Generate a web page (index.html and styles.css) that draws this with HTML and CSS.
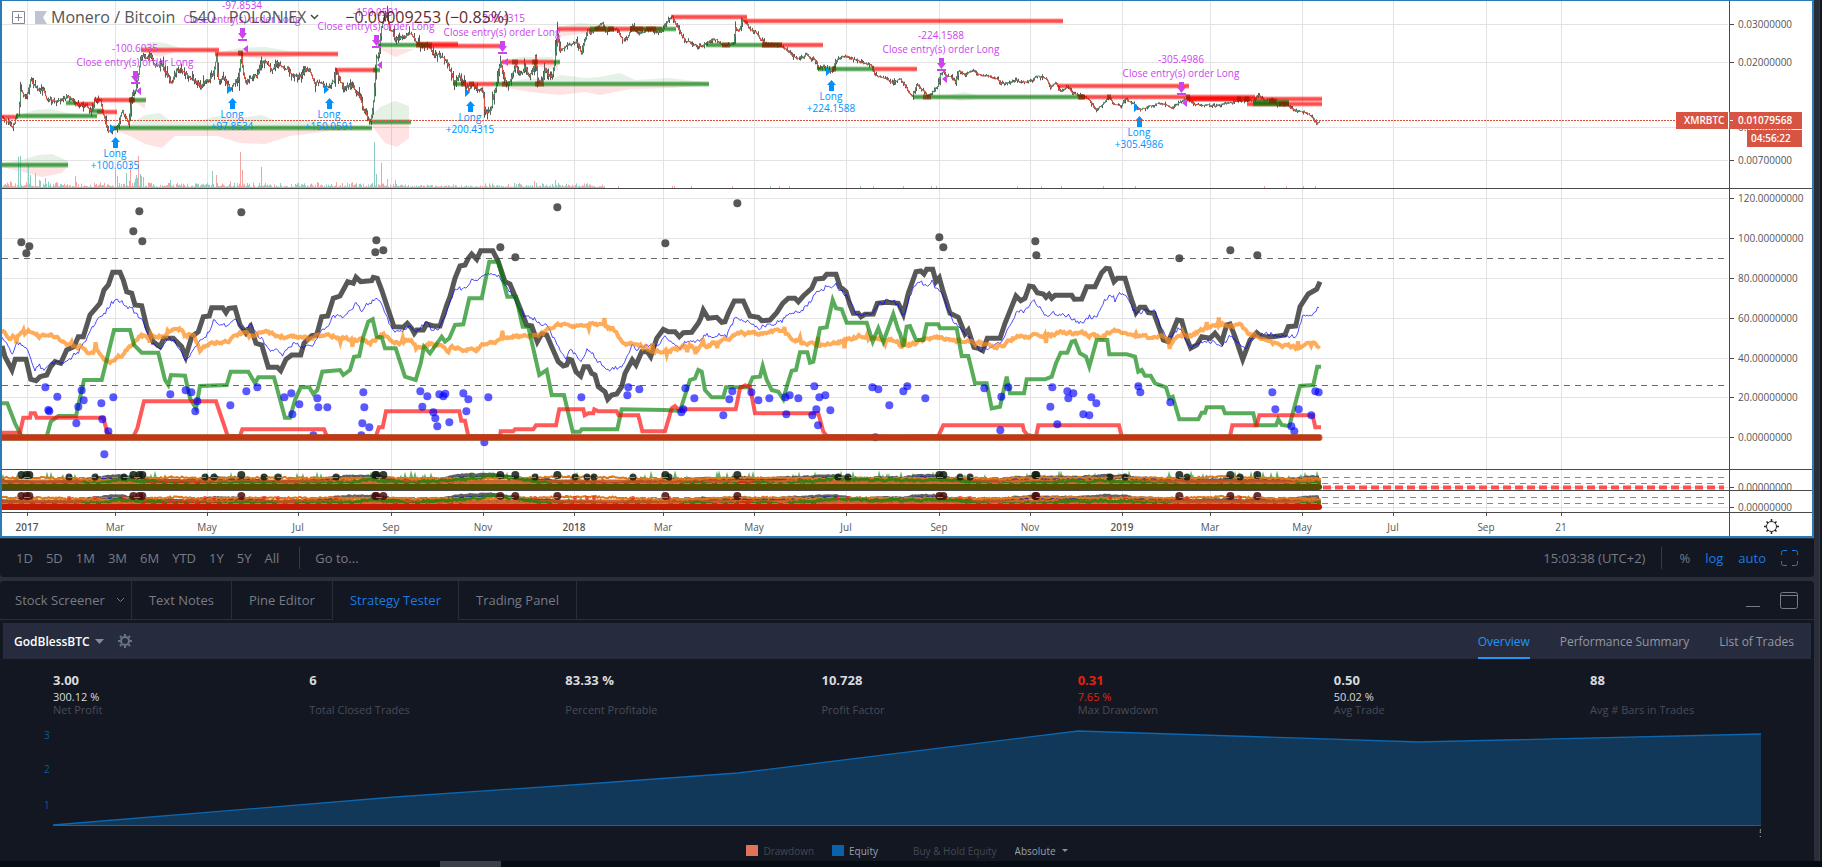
FILE: index.html
```
<!DOCTYPE html>
<html lang="en">

<head>
    <meta charset="UTF-8">
    <meta name="viewport" content="width=device-width, initial-scale=1.0">

    <link rel="stylesheet" href="styles.css">

    <title>XMRBTC - Strategy Tester</title>
</head>

<body>
    <div class="layout">
        <main class="main">
            <section class="chart">
                <svg class="chart_svg" id="chart" viewBox="2 1 1810 535" role="img" aria-label="XMRBTC price chart"></svg>
                <header class="legend">
                    <svg class="legend_add" width="13" height="13" viewBox="0 0 13 13"><path d="M.5 .5h12v12h-12zM3 6.5h7M6.5 3v7" fill="none" stroke="#777b86"/></svg>
                    <svg class="legend_flag" width="12" height="13" viewBox="0 0 12 13"><path d="M0 0h12L8 6.500l4 6.500H0z" fill="#b9becb"/></svg>
                    <h1 class="legend_title"><span>Monero / Bitcoin</span><span>540</span><span>POLONIEX</span></h1>
                    <svg class="legend_more" width="9" height="6" viewBox="0 0 9 6"><path d="M1 1l3.500 3.500L8 1" fill="none" stroke="#333" stroke-width="1.500"/></svg>
                    <span class="legend_change">−0.00009253 (−0.85%)</span>
                </header>
            </section>

            <nav class="toolbar">
                <div class="ranges">
                    <button>1D</button>
                    <button>5D</button>
                    <button>1M</button>
                    <button>3M</button>
                    <button>6M</button>
                    <button>YTD</button>
                    <button>1Y</button>
                    <button>5Y</button>
                    <button>All</button>
                </div>
                <button class="goto">Go to...</button>
                <div class="scale">
                    <button class="clock">15:03:38 (UTC+2)</button>
                    <button>%</button>
                    <button class="on">log</button>
                    <button class="on">auto</button>
                    <button class="on" aria-label="Full screen">
                        <svg width="17" height="16" viewBox="0 0 17 16"><path d="M.5 5V2.500a2 2 0 0 1 2-2H6M11 .5h3.500a2 2 0 0 1 2 2V5M16.500 11v2.500a2 2 0 0 1-2 2H11M6 15.500H2.500a2 2 0 0 1-2-2V11" fill="none" stroke="currentColor"/></svg>
                    </button>
                </div>
            </nav>

            <section class="panel">
                <div class="tabs">
                    <button class="tab tab_menu">Stock Screener
                        <svg width="9" height="6" viewBox="0 0 9 6"><path d="M1 1l3.500 3.500L8 1" fill="none" stroke="currentColor"/></svg>
                    </button>
                    <button class="tab">Text Notes</button>
                    <button class="tab">Pine Editor</button>
                    <button class="tab active">Strategy Tester</button>
                    <button class="tab">Trading Panel</button>
                    <div class="tabs_tools">
                        <button aria-label="Minimize"><svg width="14" height="17" viewBox="0 0 14 17"><path d="M0 14.500h14" stroke="currentColor"/></svg></button>
                        <button aria-label="Maximize"><svg width="18" height="17" viewBox="0 0 18 17"><path d="M2.500 .5h13a2 2 0 0 1 2 2v12a2 2 0 0 1-2 2h-13a2 2 0 0 1-2-2v-12a2 2 0 0 1 2-2zM.5 3.500h17" fill="none" stroke="currentColor"/></svg></button>
                    </div>
                </div>

                <div class="report_head">
                    <select class="strategy" aria-label="Strategy"><option>GodBlessBTC</option></select>
                    <svg class="caret" width="9" height="5" viewBox="0 0 9 5"><path d="M0 0h9L4.500 5z" fill="#858b98"/></svg>
                    <button class="gear" aria-label="Settings">
                        <svg width="14" height="14" viewBox="0 0 14 14"><circle cx="7" cy="7" r="4" fill="none" stroke="#667783" stroke-width="2"/><path d="M7 0v2M7 12v2M0 7h2M12 7h2M2 2l1.500 1.500M10.500 10.500L12 12M12 2l-1.500 1.500M3.500 10.500L2 12" stroke="#667783" stroke-width="2"/></svg>
                    </button>
                    <div class="report_tabs">
                        <button class="active">Overview</button>
                        <button>Performance Summary</button>
                        <button>List of Trades</button>
                    </div>
                </div>

                <dl class="stats">
                    <div><dd>3.00</dd><dd class="pct">300.12 %</dd><dt>Net Profit</dt></div>
                    <div><dd>6</dd><dd class="pct"></dd><dt>Total Closed Trades</dt></div>
                    <div><dd>83.33 %</dd><dd class="pct"></dd><dt>Percent Profitable</dt></div>
                    <div><dd>10.728</dd><dd class="pct"></dd><dt>Profit Factor</dt></div>
                    <div class="down"><dd>0.31</dd><dd class="pct">7.65 %</dd><dt>Max Drawdown</dt></div>
                    <div><dd>0.50</dd><dd class="pct">50.02 %</dd><dt>Avg Trade</dt></div>
                    <div><dd>88</dd><dd class="pct"></dd><dt>Avg # Bars in Trades</dt></div>
                </dl>

                <svg class="equity" viewBox="0 720 1814 120" role="img" aria-label="Equity">
                    <path d="M53 825L395 797L600 783L738 773L1078 731L1419 742L1761 734V825z" fill="#113759"/>
                    <path d="M53 825L395 797L600 783L738 773L1078 731L1419 742L1761 734" fill="none" stroke="#0c66b0" stroke-width="1.300"/>
                    <path d="M53 825.500H1761" stroke="#55534f"/>
                    <g class="equity_axis">
                        <text x="44" y="739">3</text>
                        <text x="44" y="773">2</text>
                        <text x="44" y="809">1</text>
                    </g>
                    <svg x="1750" y="826" width="11" height="14"><text class="equity_last" x="9" y="11">5</text></svg>
                </svg>

                <div class="series">
                    <label class="off"><input type="checkbox" class="swatch drawdown" checked>Drawdown</label>
                    <label><input type="checkbox" class="swatch eq" checked>Equity</label>
                    <label class="off"><input type="checkbox" class="swatch">Buy &amp; Hold Equity</label>
                    <span class="mode">
                        <select aria-label="Units"><option>Absolute</option></select>
                        <svg width="6" height="3" viewBox="0 0 6 3"><path d="M0 0h6L3 3z" fill="#8a93a0"/></svg>
                    </span>
                </div>
            </section>
        </main>
        <aside class="sidebar"></aside>
    </div>
    <footer class="strip"><div class="strip_thumb"></div></footer>

    <script src="chart.js"></script>
</body>

</html>
```
FILE: styles.css
```
* {
    box-sizing: border-box;
}

body {
    margin: 0;
    background-color: #2a2e39;
    color: #787b86;
    font-family: "Trebuchet MS", "Open Sans", "Noto Sans", sans-serif;
    font-size: 13px;
}

button,
select {
    margin: 0;
    padding: 0;
    border: 0;
    background: none;
    color: inherit;
    font: inherit;
    cursor: pointer;
}

select {
    appearance: none;
}

svg {
    display: block;
}

.layout {
    display: grid;
    grid-template-columns: minmax(0, 1fr) 8px;
}

.sidebar {
    margin-left: 5px;
    border-left: 1px solid #363a45;
    background-color: #131722;
}

/* chart */
.chart {
    position: relative;
    border: 2px solid #2a7ab5;
    border-top-width: 1px;
    background-color: #fff;
}

.chart_svg {
    width: 100%;
    height: auto;
}

.chart_svg text {
    font-size: 10px;
}

.chart_svg .axis text {
    fill: #555;
}

.chart_svg .axis .year {
    font-weight: 600;
}

.chart_svg .marks text {
    text-anchor: middle;
}

.chart_svg .tag text {
    fill: #fff;
    font-weight: 600;
}

.legend {
    position: absolute;
    top: 4px;
    left: 10px;
    display: flex;
    align-items: center;
    height: 24px;
    font-size: 16px;
    color: #444;
    opacity: 0.9;
}

.legend_flag {
    margin-left: 10px;
}

.legend_title {
    display: flex;
    gap: 13px;
    margin: 0 4px;
    font-size: 16px;
    font-weight: 400;
}

.legend_change {
    margin-left: 26px;
    color: #4f1212;
}

/* range toolbar */
.toolbar {
    display: flex;
    align-items: center;
    height: 39px;
    margin-bottom: 4px;
    padding: 0 16px 0 9px;
    border-top: 1px solid #2a2e39;
    border-radius: 0 0 4px 4px;
    background-color: #131722;
}

.ranges {
    display: flex;
    padding-right: 14px;
    border-right: 1px solid #363a45;
}

.ranges button {
    padding: 2px 6px 2px 7px;
}

.goto {
    margin-left: 15px;
}

.scale {
    display: flex;
    align-items: center;
    gap: 15px;
    margin-left: auto;
}

.clock {
    margin-right: 2px;
    padding: 2px 16px 2px 0;
    border-right: 1px solid #363a45;
}

.on {
    color: #1a7be0;
}

/* bottom panel */
.panel {
    border-radius: 4px 4px 0 0;
    background-color: #131722;
}

.tabs {
    display: flex;
    height: 39px;
    margin-bottom: 3px;
}

.tab {
    padding: 0 17px;
    border-right: 1px solid #2a2e39;
    border-bottom: 1px solid #2a2e39;
}

.tab_menu {
    display: flex;
    align-items: center;
    gap: 11px;
    padding: 0 6px 0 15px;
}

.tab.active {
    border-bottom-color: transparent;
    color: #1a7be0;
}

.tabs_tools {
    display: flex;
    flex: 1;
    align-items: center;
    justify-content: flex-end;
    gap: 20px;
    padding-right: 16px;
    border-bottom: 1px solid #2a2e39;
}

.report_head {
    display: flex;
    align-items: center;
    height: 36px;
    margin: 0 3px;
    padding: 0 17px 0 11px;
    background-color: #262b3e;
    font-size: 12px;
}

.strategy {
    color: #fff;
    font-weight: 600;
}

.caret {
    margin-left: 5px;
}

.gear {
    margin-left: 14px;
}

.report_tabs {
    display: flex;
    gap: 30px;
    height: 100%;
    margin-left: auto;
    color: #9598a1;
}

.report_tabs button {
    padding: 2px 0 0;
    border-bottom: 2px solid transparent;
}

.report_tabs .active {
    border-color: #2196f3;
    color: #2196f3;
}

.stats {
    display: grid;
    grid-template-columns: repeat(6, 1fr) 224px;
    margin: 0;
    padding: 12px 0 0 53px;
    color: #d8dade;
}

.stats div {
    display: flex;
    flex-direction: column;
}

.stats dd {
    margin: 0;
    font-weight: 700;
    line-height: 18px;
}

.stats .pct {
    height: 14px;
    font-size: 11px;
    font-weight: 400;
    line-height: 16px;
}

.stats dt {
    color: #484c57;
    font-size: 11px;
    line-height: 14px;
}

.stats .down dd {
    color: #e0240c;
}

.equity {
    width: 100%;
    height: auto;
    margin-top: 3px;
}

.equity text {
    font-size: 10px;
}

.equity_axis {
    fill: #0d5a99;
}

.equity .equity_last {
    fill: #a0a3ab;
}

.series {
    display: flex;
    align-items: center;
    justify-content: center;
    gap: 18px;
    height: 21px;
    font-size: 10px;
    color: #98a1ae;
}

.series label,
.mode {
    display: flex;
    align-items: center;
    gap: 5px;
}

.series .off {
    color: #444853;
}

.swatch {
    width: 12px;
    height: 11px;
    margin: 0;
    appearance: none;
}

.drawdown {
    background-color: #e0735a;
}

.eq {
    background-color: #0b62aa;
}

.strip {
    height: 6px;
    background-color: #060d12;
}

.strip_thumb {
    width: 61px;
    height: 6px;
    margin-left: 440px;
    background-color: #3c4049;
}
```
FILE: chart.js
```
let svg = document.querySelector('#chart');
let out = [];

// small repeatable noise so every load draws the same bars
let seed = 7;
function rnd() {
    seed = (seed * 16807) % 2147483647;
    return seed / 2147483647;
}

// data comes in blocks of x,y pairs in thirds of a pixel: [left, top, pairs]
function points(blocks) {
    let res = [];
    blocks.forEach(([left, top, text]) => {
        text.trim().split(/\s+/).forEach((pair) => {
            let [x, y] = pair.split(',').map(Number);
            res.push([left + x / 3, top + y / 3]);
        })
    })
    return res;
}

function sample(pts, step) {
    let res = [];
    let i = 0;
    for (let x = pts[0][0]; x <= pts[pts.length - 1][0]; x += step) {
        while (i < pts.length - 2 && pts[i + 1][0] < x) i++;
        let [x1, y1] = pts[i];
        let [x2, y2] = pts[i + 1];
        res.push([x, y1 + (y2 - y1) * (x - x1) / Math.max(x2 - x1, 0.1)]);
    }
    return res;
}

function toPath(pts) {
    return 'M' + pts.map((p) => p[0].toFixed(1) + ' ' + p[1].toFixed(1)).join('L');
}

function path(d, stroke, width = 1, extra = '') {
    out.push(`<path d="${d}" fill="none" stroke="${stroke}" stroke-width="${width}" ${extra}/>`);
}

function text(x, y, str, extra = '') {
    out.push(`<text x="${x}" y="${y}" ${extra}>${str}</text>`);
}

const END = 1321;
const months = [[27, '2017'], [115, 'Mar'], [207, 'May'], [298, 'Jul'], [391, 'Sep'], [483, 'Nov'], [574, '2018'], [663, 'Mar'], [754, 'May'], [846, 'Jul'], [939, 'Sep'], [1030, 'Nov'], [1122, '2019'], [1210, 'Mar'], [1302, 'May'], [1393, 'Jul'], [1486, 'Sep'], [1561, '21']];
const levels = [[24, '0.03000000'], [62, '0.02000000'], [127, '0.01000000'], [160, '0.00700000'], [198, '120.00000000'], [238, '100.00000000'], [278, '80.00000000'], [318, '60.00000000'], [358, '40.00000000'], [397, '20.00000000'], [437, '0.00000000'], [487, '0.00000000'], [507, '0.00000000']];

const price = points([
    [0, 0, `6,350 25,365 35,380 45,355 55,345 60,275 70,290 78,285 90,240 100,255 115,270 125,265 140,300 155,300 170,303 185,302 200,285 215,300 235,318 255,325 275,330 283,300 300,305 312,355 323,385 335,390 350,380 365,335 385,375 395,280 405,265 415,220 420,180 427,160 437,170 445,180 450,160 462,195 475,205 485,195 500,230 515,245 530,210 550,215 570,230 590,245 600,260 610,240 625,240 640,220 648,160 652,240 670,235 690,265 700,245 715,235 722,150 728,220 735,245 750,235 770,225 785,190 800,195 815,205 830,185 845,200 860,205 880,230 900,230 915,210 930,215 945,250 960,245 975,265 990,270 1000,250 1007,205 1015,240 1030,265 1045,250 1060,265 1075,275 1085,320 1100,350 1110,355 1120,300 1127,170 1135,160 1143,80 1150,60 1157,40 1165,80 1175,95 1187,120 1200,110 1215,105 1228,90 1240,110 1255,125 1270,135 1290,140 1310,170 1330,175 1345,195 1349,215`],
    [450, 0, `0,215 12,255 25,225 40,245 55,275 68,250 80,265 98,275 103,340 118,335 128,290 138,250 150,180 158,215 170,260 180,245 195,190 205,205 215,225 222,200 235,230 248,220 255,170 262,250 275,240 285,200 295,235 308,225 315,170 321,110 330,145 345,135 360,130 378,125 392,160 400,130 412,85 420,100 430,90 440,80 455,70 465,95 480,85 500,90 515,120 530,115 545,80 560,100 580,95 600,90 618,95 635,95 642,75 655,60 665,50 675,75 690,100 705,125 725,130 740,138 760,135 790,120 810,130 830,130 850,130 855,85 865,95 875,60 885,65 900,90 915,95 930,120 950,130 975,135 990,140 1010,150 1040,175 1070,165 1090,175 1105,205 1120,200 1145,215 1155,185 1170,175 1195,170 1215,180 1240,195 1260,190 1275,225 1300,230 1325,248 1345,240`],
    [900, 0, `0,240 15,260 35,290 50,255 65,270 80,290 95,280 110,265 120,225 130,215 140,230 150,225 165,250 175,215 195,225 215,215 235,225 260,228 290,235 300,250 330,248 350,240 370,250 395,240 410,225 440,240 450,260 465,250 480,275 500,265 520,280 545,285 565,300 587,330 605,315 625,290 640,315 660,320 675,300 700,310 720,328 750,320 780,310 815,325 840,305 860,295 875,310 900,315 930,318 960,315 1000,305 1030,303 1060,300 1075,285 1090,300 1110,298 1130,315 1160,310 1185,335 1210,335 1235,350 1248,370 1258,360`]
]);

const gray = points([
    [0, 190, `6,468 15,500 36,540 46,508 78,508 92,568 108,572 120,560 140,555 152,530 165,515 182,520 200,480 222,470 235,440 250,440 270,375 300,340 312,300 325,285 338,247 360,247 370,270 380,305 395,310 405,345 425,347 440,410 460,455 480,470 492,445 520,445 545,470 557,500 575,440 595,425 610,380 628,378 635,353 668,353 678,368 686,355 705,353 720,405 738,430 752,410 768,460 785,465 805,532 832,532 842,542 858,508 875,495 902,495 912,460 935,437 950,435 965,380 983,378 1000,325 1020,318 1043,275 1060,280 1068,262 1082,275 1115,272 1120,262 1132,265 1145,300 1165,360 1182,410 1210,412 1222,400 1235,415 1243,430 1250,420 1270,420 1280,402 1300,408 1320,408 1340,345`],
    [450, 190, `0,320 15,265 30,228 45,225 55,205 65,192 80,208 92,182 128,182 145,215 165,275 180,282 200,330 218,375 230,405 245,408 262,455 275,432 290,435 305,470 325,515 340,528 350,525 357,508 365,510 378,545 392,558 402,530 415,530 425,550 435,555 445,590 465,605 473,628 485,615 500,612 515,590 525,550 547,510 558,525 575,485 592,485 602,500 620,445 640,418 655,425 675,425 688,440 700,428 725,427 745,400 752,385 760,360 775,385 800,382 815,397 825,395 835,370 853,333 880,333 900,378 925,382 935,392 960,390 980,368 998,340 1015,325 1035,325 1045,335 1060,318 1085,295 1097,267 1120,265 1130,253 1158,253 1170,290 1188,305 1200,345 1210,370 1225,370 1233,380 1245,373 1270,372 1282,340 1310,337 1345,340`],
    [900, 190, `0,350 10,372 25,310 48,245 62,243 72,252 80,238 98,238 108,275 118,263 128,300 150,370 175,382 195,432 205,420 222,472 235,475 248,482 262,445 300,445 315,400 348,318 362,332 375,325 388,288 400,290 412,308 430,312 438,322 447,313 455,325 465,316 515,316 523,328 545,327 560,290 585,290 605,248 618,235 628,236 642,275 652,265 675,265 690,315 708,368 720,352 735,352 745,368 762,370 780,420 790,450 805,455 820,420 832,390 845,392 860,445 872,475 890,465 905,440 930,445 945,430 965,455 980,405 990,402 1005,440 1028,508 1050,450 1070,428 1085,440 1120,440 1155,435 1165,410 1187,408 1200,350 1225,312 1250,298 1260,275`]
]);

const blue = points([
    [0, 190, `6,435 20,465 36,490 50,455 75,470 90,500 105,540 115,525 135,540 150,515 180,520 210,505 240,480 262,440 280,405 310,375 338,335 365,333 380,355 395,350 408,375 425,380 440,430 460,465 485,475 505,445 530,460 557,512 575,490 600,450 615,445 640,395 680,405 710,390 730,420 752,400 765,425 785,445 805,480 825,475 845,495 865,475 885,460 905,475 945,460 965,415 985,410 1000,375 1030,385 1068,340 1085,360 1100,345 1128,325 1145,345 1165,395 1180,420 1205,425 1230,405 1245,425 1280,395 1300,425 1320,410 1345,355`],
    [450, 190, `0,340 15,300 50,290 65,270 80,278 98,255 150,258 165,290 185,310 200,340 220,375 250,385 270,405 290,400 310,445 330,475 348,505 360,480 378,490 392,520 412,480 430,495 440,510 455,520 472,545 485,535 515,535 532,500 547,460 560,480 580,465 620,470 645,440 665,455 690,475 705,455 740,455 765,435 790,440 815,430 830,440 855,385 880,390 910,405 925,420 940,405 965,405 1000,390 1020,365 1045,370 1075,340 1100,310 1130,290 1158,285 1175,305 1200,330 1215,365 1235,375 1270,370 1285,340 1325,330 1345,345`],
    [900, 190, `10,380 25,330 45,285 65,275 78,290 95,275 110,295 125,310 150,375 170,405 195,430 215,450 240,480 260,475 300,460 325,420 348,370 380,360 400,330 415,345 435,375 455,370 500,375 525,390 550,400 565,380 590,380 610,335 632,310 645,330 655,310 675,312 690,345 710,370 735,360 765,365 785,420 805,445 835,415 850,430 870,475 890,465 910,450 940,455 965,470 990,435 1010,455 1035,480 1055,445 1085,435 1115,430 1135,440 1190,440 1210,375 1240,375 1258,345`]
]);

const orange = points([
    [0, 190, `6,420 30,440 60,432 90,425 115,440 150,440 180,450 210,465 240,470 270,490 290,480 315,510 335,515 365,495 400,460 420,435 460,445 500,430 520,415 545,415 560,430 580,435 600,480 620,465 650,455 690,450 720,435 770,435 795,425 830,440 870,440 920,445 960,440 1000,435 1050,450 1080,450 1110,460 1150,440 1200,455 1225,450 1265,475 1290,460 1320,465 1345,478`],
    [450, 190, `0,470 40,475 80,475 110,460 150,455 195,440 240,440 290,425 320,410 380,405 430,405 470,415 490,420 520,460 560,460 600,480 640,485 690,470 740,475 790,460 850,440 880,430 930,435 980,425 1020,440 1060,460 1130,470 1180,455 1230,440 1290,450 1345,450`],
    [900, 190, `0,470 60,455 110,440 150,450 200,450 250,465 310,465 350,440 400,435 450,435 510,425 560,435 600,440 640,425 700,430 740,440 790,440 815,455 840,435 880,435 920,410 950,405 1020,405 1050,435 1080,440 1130,460 1190,475 1220,465 1262,472`]
]);

const green = points([
    [0, 190, `6,640 22,640 45,700 65,740 140,740 152,695 175,678 228,678 252,570 305,570 342,420 390,420 402,465 425,488 475,488 495,570 505,585 513,555 555,557 570,625 588,655 600,588 680,585 692,545 745,545 765,580 775,562 822,562 855,683 870,683 885,630 902,592 928,592 940,612 952,600 967,545 1020,540 1030,555 1050,540 1062,500 1078,498 1090,440 1105,395 1118,388 1130,440 1145,442 1155,475 1187,475 1215,560 1247,570 1262,520 1272,470 1290,490 1325,440 1335,455 1348,445`],
    [450, 190, `0,440 15,405 40,403 58,325 95,325 118,215 145,215 172,320 198,320 218,410 235,410 268,555 290,540 305,615 342,615 368,725 390,725 395,718 502,718 515,658 645,660 690,663 720,570 735,565 745,540 755,545 765,600 785,622 820,622 828,592 895,592 908,562 930,560 938,528 950,570 965,600 985,605 1000,628 1010,590 1025,542 1038,540 1050,487 1072,487 1080,518 1090,515 1110,415 1130,412 1148,330 1158,355 1175,358 1190,398 1250,398 1268,455 1285,415 1300,455 1320,400 1330,372 1345,420`],
    [900, 190, `0,430 10,470 20,410 30,408 48,450 70,450 80,403 115,403 120,415 170,415 185,498 205,498 225,580 260,580 275,655 300,650 320,560 330,610 372,610 380,568 435,568 455,560 468,520 482,488 502,488 515,455 525,452 540,490 558,500 568,530 590,450 622,450 628,493 680,493 705,500 715,545 725,540 735,557 752,557 765,580 798,592 808,625 818,620 838,688 895,688 905,668 915,668 920,652 968,652 975,670 1060,670 1068,706 1128,706 1135,688 1145,705 1168,708 1200,588 1240,585 1252,530 1263,530`]
]);

const red = points([
    [0, 190, `6,728 60,728 70,683 90,683 92,670 105,670 110,683 310,683 322,728 340,740 400,740 412,715 432,634 648,634 683,738 720,738 727,718 972,718 980,738 1128,738 1137,712 1148,712 1158,664 1349,664`],
    [450, 190, `0,664 28,664 34,692 45,692 55,738 150,738 152,724 190,724 195,718 250,718 258,706 318,706 328,658 400,658 404,676 415,670 430,670 433,658 445,664 500,664 506,676 565,676 577,724 645,724 665,655 675,648 685,658 857,658 870,595 885,586 900,590 915,670 1105,670 1120,725 1130,738`],
    [900, 190, `0,740 115,738 130,706 368,706 372,722 382,735 408,740 415,706 657,706 665,740 990,740 997,706 1070,706 1078,676 1238,676 1246,712 1263,712`]
]);

const grayDots = points([
    [0, 190, `64,157 88,169 79,190 400,124 418,64 427,154 724,67 1129,151 1126,187 1150,181`],
    [450, 190, `151,172 196,202 322,52 646,160 862,40`],
    [900, 190, `118,142 130,172 406,154 409,196 838,205 991,181 1072,196`]
]);

const blueDots = points([
    [0, 190, `136,592 172,620 145,660 148,664 245,601 251,631 235,650 229,700 304,640 307,688 325,724 340,622 313,793 511,613 557,601 574,607 592,634 586,664 691,646 739,604 772,592 853,622 874,610 898,643 877,673 952,625 955,652 982,652 940,736 1090,607 1093,652 1087,700 1108,712 1084,736 1261,604 1267,650 1282,619 1318,613 1330,619 1336,611 1300,667 1306,685 1312,709 1348,697`],
    [450, 190, `40,610 55,628 49,664 115,622 103,757 394,622 535,592 532,616 568,598 706,595 700,658 694,667 733,625 820,676 838,628 847,604 904,607 925,631 958,625 1009,673 1006,622 1019,616 1045,625 1093,589 1108,622 1126,616 1099,658 1087,676 1104,706 1141,661 1267,592 1285,598 1318,646 1276,742`],
    [900, 190, `10,604 22,589 76,625 253,595 304,620 325,592 301,721 451,650 457,592 472,703 502,604 520,610 505,625 550,673 568,676 574,622 589,640 715,589 721,607 811,637 1117,607 1126,658 1196,658 1174,709 1183,724 1234,676 1246,604 1256,607`]
]);

// support and resistance: [x1, x2, y]
const redBars = [[2, 17, 117], [75, 94, 104], [94, 134, 100], [97, 117, 112], [141, 219, 50], [215, 338, 54], [336, 376, 70], [417, 458, 44], [420, 501, 46], [463, 494, 84], [502, 553, 62], [557, 662, 29], [671, 747, 17], [744, 1063, 21], [762, 823, 45], [872, 917, 69], [1058, 1189, 86], [1079, 1255, 97], [1187, 1322, 99], [1187, 1250, 99], [1247, 1322, 104]];
const greenBars = [[16, 97, 116], [66, 76, 103], [92, 102, 111], [129, 146, 100], [112, 372, 128], [370, 411, 122], [2, 68, 165], [373, 380, 70], [378, 427, 45], [454, 463, 84], [494, 709, 84], [553, 560, 62], [590, 613, 29], [630, 676, 29], [706, 782, 45], [818, 873, 69], [913, 1084, 97], [1253, 1289, 102], [1253, 1289, 104]];
const overlaps = [[238, 243, 53], [129, 135, 100], [416, 432, 45], [461, 466, 84], [469, 474, 84], [502, 508, 84], [535, 544, 84], [512, 518, 62], [532, 538, 62], [595, 606, 29], [608, 614, 29], [630, 643, 29], [646, 656, 29], [722, 730, 45], [762, 782, 45], [832, 836, 69], [923, 931, 97], [1078, 1085, 97], [1107, 1111, 97], [1186, 1190, 97], [1237, 1241, 99], [1244, 1249, 99], [1269, 1277, 101], [1279, 1289, 104]];

function grid() {
    let d = '';
    months.forEach(([x]) => { d += `M${x + 0.5} 1V512` });
    levels.forEach(([y]) => { d += `M2 ${y + 0.5}H1728` });
    path(d, '#e3e3e3');
}

function clouds() {
    out.push('<g fill="#008000" opacity=".1">');
    ['M2 163L22 160L38 155L52 154L68 161V165H2z', 'M20 115L35 110L50 109L68 113L94 116z', 'M112 127L130 124L145 115L160 113L170 121L195 122L217 116L240 118L262 115L278 122L300 120L330 124L372 127z', 'M370 118L380 107L395 101L409 106V121H370z', 'M141 48L150 42L165 43L180 48L217 50zM220 52L240 48L265 47L290 51L330 53z', 'M497 83L515 81L530 78L550 80L560 75L585 78L600 77L620 73L635 80L670 78L709 83z', 'M505 60L520 57L553 57V62zM557 27L580 23L620 26L676 28z', 'M948 95L965 92L980 96z'].forEach((d) => out.push(`<path d="${d}"/>`));
    out.push('</g><g fill="#f00" opacity=".11">');
    ['M2 167H67L62 173L42 177L28 173L10 169z', 'M114 130H370L330 131L290 136L265 144L240 143L217 136L190 136L175 136L162 148L145 144L130 136z', 'M370 123H409V138L397 147L385 143L375 130z', 'M133 101H145V109L138 104z', 'M145 52L160 57L175 52zM240 56L265 59L300 56z', 'M497 86H700L670 88L630 89L600 95L585 92L560 95L530 92z', 'M505 64H558V70L530 65zM557 31V37L600 31z', 'M378 48L395 57L415 49z', 'M950 99L960 101L978 99z'].forEach((d) => out.push(`<path d="${d}"/>`));
    out.push('</g>');
}

function volume() {
    let spikes = { 18: 31, 20: 32, 28: 22, 30: 13, 35: 15, 45: 10, 75: 12, 115: 18, 117: 12, 126: 15, 130: 25, 136: 13, 138: 32, 140: 14, 170: 8, 212: 17, 216: 13, 240: 36, 242: 18, 261: 21, 374: 46, 376: 14, 381: 25, 387: 9, 395: 8, 514: 5, 534: 7, 536: 5, 555: 8, 558: 5 };
    let up = '', down = '';
    for (let x = 2; x < END; x++) {
        let amp = x < 55 ? 6 : x < 125 ? 4 : x < 150 ? 8 : x < 230 ? 4 : x < 260 ? 5 : x < 410 ? 4 : x < 480 ? 2 : x < 605 ? 3 : 0;
        let h = spikes[x] || (amp ? 1 + rnd() * rnd() * amp * 1.5 : rnd() < 0.03 ? 2 : 0);
        if (!h) continue;
        let isDown = [138, 240, 242, 35, 216, 75, 534, 130].includes(x) || (!spikes[x] && rnd() > 0.5);
        let bar = `M${x + 0.5} 188v-${h.toFixed(1)}`;
        if (isDown) down += bar; else up += bar;
    }
    path(up, '#8ccdc4');
    path(down, '#f5a3a3');
}

function candles() {
    let pts = sample(price, 1);
    let wicks = '', up = '', down = '';
    let prev = pts[0][1];
    let drift = 0;
    pts.forEach(([px, y], i) => {
        let x = Math.floor(px) + 0.5;
        let amp = x < 150 ? 3.2 : x < 560 ? 3.8 : x < 900 ? 2 : 1.5;
        drift = drift * 0.75 + (rnd() - 0.5) * amp;
        let close = y + drift;
        let slope = i ? Math.abs(y - pts[i - 1][1]) : 0;
        let top = Math.min(prev, close) - rnd() * rnd() * (amp * 1.8 + slope);
        let bottom = Math.max(prev, close) + rnd() * rnd() * (amp * 1.8 + slope);
        wicks += `M${x} ${top.toFixed(1)}V${bottom.toFixed(1)}`;
        let body = `M${x} ${prev.toFixed(1)}V${(close + (close > prev ? 0.5 : -0.5)).toFixed(1)}`;
        if (close > prev) down += body; else up += body;
        prev = close;
    })
    path(wicks, '#5a5a5a');
    path(up, '#4f9468');
    path(down, '#e0503a');
}

function bars(list, color) {
    list.forEach(([x1, x2, y]) => {
        path(`M${x1} ${y}H${x2}`, color, 5, 'opacity=".4"');
        path(`M${x1} ${y}H${x2}`, color, 3, 'opacity=".5"');
    })
}

function trades() {
    out.push('<g class="marks" fill="#0090ff">');
    [[115, 137, '+100.6035'], [232, 98, '+97.8534'], [329, 98, '+150.0591'], [470, 101, '+200.4315'], [831, 80, '+224.1588'], [1139, 116, '+305.4986']].forEach(([x, y, qty]) => {
        out.push(`<path d="M${x + 0.5} ${y}l4.500 5h-2v6h-5v-6h-2z"/><path d="M${x - 5} ${y - 13}l5 4.500l-5 4.500z"/>`);
        text(x, y + 20, 'Long');
        text(x, y + 32, qty);
    })
    out.push('</g><g class="marks" fill="#cc44ee">');
    [[135, 71, '-100.6035', 20], [242, 28, '-97.8534', 21], [376, 35, '-150.0591', 30], [502, 41, '-200.4315', 21], [941, 58, '-224.1588', 21], [1181, 82, '-305.4986', 21]].forEach(([x, y, qty, gap]) => {
        out.push(`<path d="M${x - 2} ${y}h5v5h2l-4.500 6l-4.500 -6h2z"/><path d="M${x - 4} ${y + 11}h9v2h-9z"/><path d="M${x + 1} ${y + gap}l5 -4v8z"/>`);
        text(x, y - 19, qty);
        text(x, y - 5, 'Close entry(s) order Long');
    })
    out.push('</g>');
}

function oscillators() {
    path('M2 258.5H1728M2 385.5H1728', '#6b6b6b', 1, 'stroke-dasharray="6 5"');
    path(toPath(gray), '#333', 5, 'opacity=".82"');
    let jag = sample(blue, 1.5).map(([x, y]) => [x, y + Math.round((rnd() - 0.5) * 4)]);
    path(toPath(jag), '#0000ff', 1, 'opacity=".7"');
    let drift = 0;
    let rough = sample(orange, 1.2).map(([x, y]) => {
        drift = drift * 0.7 + (rnd() - 0.5) * 3;
        return [x, y + drift + (rnd() < 0.05 ? (rnd() - 0.5) * 16 : 0)];
    });
    path(toPath(rough), '#ff8c1a', 4, 'opacity=".72"');
    path(toPath(green), '#008000', 4, 'opacity=".65"');
    path(toPath(red), '#ff0000', 4, 'opacity=".65"');
    grayDots.forEach(([x, y]) => out.push(`<circle cx="${x}" cy="${y}" r="4" fill="#333" opacity=".82"/>`));
    blueDots.forEach(([x, y]) => out.push(`<circle cx="${x}" cy="${y}" r="4" fill="#00f" opacity=".65"/>`));
    path(`M2 437.5H${END - 2}`, '#a04a1a', 7, 'stroke-linecap="round" opacity=".8"');
    path(`M2 437.5H${END}`, '#c83416', 5);
}

// the same oscillators squeezed into a thin pane
function thinPane(top, base, band, main) {
    let squeeze = (pts, k, noise) => sample(pts, 1.5).map(([x, y]) => [x, base - (437 - y) * k + (rnd() - 0.5) * noise]);
    out.push(`<clipPath id="pane${top}"><path d="M2 ${top}H1728V${base + 5}H2z"/></clipPath><g clip-path="url(#pane${top})">`);
    let d = '';
    for (let x = 3; x < END; x += 2) {
        let tall = main === 'green' ? 2 + rnd() * 7 : 1 + rnd() * 3;
        if (rnd() < 0.2) d += `M${x - 2} ${top + 9}l2 -${tall.toFixed(1)}l2 7z`;
    }
    out.push(`<path d="${d}" fill="#3fa040" opacity=".8"/>`);
    path(toPath(squeeze(gray, 0.065, 1)), '#444', 4, 'opacity=".85"');
    path(toPath(squeeze(blue, 0.065, 1)), '#1010d0', 1);
    path(`M2 ${base - 4}H${END}`, '#c8541a', 7, 'opacity=".9"');
    path(toPath(squeeze(orange, 0.09, 2)), '#e0781c', 2);
    path(toPath(squeeze(green, 0.065, 2)), '#2d8010', 3, 'opacity=".9"');
    path(toPath(squeeze(red, 0.08, 2)), '#e02810', 3, 'opacity=".9"');
    let extra = [[69, 0], [95, 0], [124, 0], [205, 0], [214, 0], [264, 0], [278, 0], [336, 0], [535, 0], [575, 0], [587, 0], [594, 0], [633, 0], [669, 0], [838, 0], [848, 0], [960, 0], [970, 0], [1110, 0], [1125, 0], [1187, 0], [1240, 0]];
    extra.concat(grayDots).forEach(([x, y], i) => {
        let color = main === 'green' ? '#101c10' : (y ? '#4a0d0d' : '#e02a1a');
        out.push(`<circle cx="${x}" cy="${top + (y ? 5 : 7)}" r="${y ? 4 : main === 'green' ? 3.5 : 2}" fill="${color}" opacity=".85"/>`);
    })
    if (main === 'green') path(`M${END + 2} ${base + 0.5}H1724`, '#ff5050', 4, 'stroke-dasharray="8 4"');
    path(`M2 ${base}H${END - 2}`, band, 6, 'stroke-linecap="round"');
    path(`M2 ${base - 9.5}H1728M2 ${base - 3.5}H1728`, '#888', 1, 'stroke-dasharray="6 5"');
    out.push('</g>');
}

function axes() {
    path('M2 188.5H1812M2 469.5H1812M2 490.5H1812M2 512.5H1812M1729.5 1V536', '#4a4a4a');
    let ticks = '';
    out.push('<g class="axis">');
    months.forEach(([x, label]) => {
        ticks += `M${x + 0.5} 512v4`;
        text(x, 531, label, 'text-anchor="middle"' + (label.startsWith('20') ? ' class="year"' : ''));
    })
    levels.forEach(([y, label]) => {
        ticks += `M1730 ${y + 0.5}h4`;
        text(1738, y + 4, label);
    })
    out.push('</g>');
    path(ticks, '#4a4a4a');
    path('M2 120.5H1676', '#d75442', 1, 'stroke-dasharray="2 1"');
    out.push('<g class="tag"><path d="M1676 112h52v17h-52zM1729 112h73v17h-73zM1747 130h55v17h-55z" fill="#d75442"/>');
    path('M1730 120.5h3', '#fff');
    text(1684, 124, 'XMRBTC');
    text(1738, 124, '0.01079568');
    text(1751, 142, '04:56:22');
    out.push('</g>');
    out.push('<circle cx="1771.5" cy="526.5" r="5" fill="none" stroke="#222"/>');
    path('M1771.5 519v2.500M1771.5 531.500v2.500M1764 526.5h2.500M1776.500 526.5h2.500M1766.500 521.500l1.500 1.500M1776.500 521.500l-1.500 1.500M1766.500 531.500l1.500 -1.500M1776.500 531.500l-1.500 -1.500', '#222', 1.5);
}

grid();
clouds();
volume();
candles();
bars(redBars, '#ff0000');
bars(greenBars, '#007a00');
overlaps.forEach(([x1, x2, y]) => path(`M${x1} ${y}H${x2}`, '#8a1f00', 5, 'opacity=".65"'));
trades();
oscillators();
thinPane(470, 487, '#544d00', 'green');
thinPane(491, 507, '#c41c00', 'red');
axes();
svg.innerHTML = out.join('');
```
